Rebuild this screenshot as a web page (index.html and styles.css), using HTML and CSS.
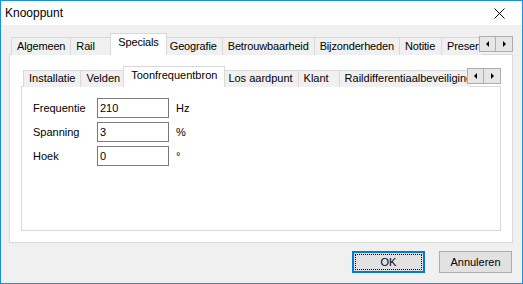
FILE: index.html
```html
<!DOCTYPE html>
<html lang="nl">
<head>
    <meta charset="UTF-8">
    <title>Knooppunt</title>
    <link rel="stylesheet" href="styles.css">
</head>
<body>
    <div class="window">
        <div class="titlebar">
            <span class="title">Knooppunt</span>
            <span class="close">
                <svg width="11" height="11" viewBox="0 0 11 11">
                    <path d="M0.5 0.5 L10.5 10.5 M10.5 0.5 L0.5 10.5" stroke="#000" stroke-width="1" fill="none"/>
                </svg>
            </span>
        </div>

        <div class="client">
            <div class="tabstrip main-tabs">
                <div class="tabs">
                    <div class="tab">Algemeen</div>
                    <div class="tab">Rail</div>
                    <div class="tab active">Specials</div>
                    <div class="tab">Geografie</div>
                    <div class="tab">Betrouwbaarheid</div>
                    <div class="tab">Bijzonderheden</div>
                    <div class="tab">Notitie</div>
                    <div class="tab">Presentatie</div>
                </div>
                <div class="spin">
                    <span class="spin-btn"><i class="arrow left"></i></span>
                    <span class="spin-btn"><i class="arrow right"></i></span>
                </div>
            </div>

            <div class="panel outer-panel">
                <div class="tabstrip">
                    <div class="tabs">
                        <div class="tab">Installatie</div>
                        <div class="tab">Velden</div>
                        <div class="tab active">Toonfrequentbron</div>
                        <div class="tab">Los aardpunt</div>
                        <div class="tab">Klant</div>
                        <div class="tab">Raildifferentiaalbeveiliging</div>
                    </div>
                    <div class="spin">
                        <span class="spin-btn"><i class="arrow left"></i></span>
                        <span class="spin-btn"><i class="arrow right"></i></span>
                    </div>
                </div>

                <div class="panel inner-panel">
                    <div class="field">
                        <label>Frequentie</label>
                        <input type="text" value="210">
                        <span class="unit">Hz</span>
                    </div>
                    <div class="field">
                        <label>Spanning</label>
                        <input type="text" value="3">
                        <span class="unit">%</span>
                    </div>
                    <div class="field">
                        <label>Hoek</label>
                        <input type="text" value="0">
                        <span class="unit">°</span>
                    </div>
                </div>
            </div>

            <div class="footer">
                <button class="btn default"><span>OK</span></button>
                <button class="btn">Annuleren</button>
            </div>
        </div>
    </div>
</body>
</html>
```

FILE: styles.css
```css
body {
    margin: 0;
    font-family: "Liberation Sans", Arial, sans-serif;
    font-size: 11px;
    color: #000;
}
.window {
    width: 523px;
    height: 284px;
    box-sizing: border-box;
    border: 1px solid #1a8fe6;
    background-color: #f0f0f0;
    display: flex;
    flex-direction: column;
}
.titlebar {
    height: 24px;
    background-color: #fff;
    display: flex;
    align-items: center;
    justify-content: space-between;
    padding-left: 4px;
}
.title {
    font-size: 12px;
}
.close {
    width: 46px;
    display: flex;
    justify-content: center;
    padding-left: 9px;
    padding-top: 1px;
}
.client {
    flex: 1;
    padding: 8px 9px 0 8px;
    display: flex;
    flex-direction: column;
}

/* tab strips */
.tabstrip {
    position: relative;
    height: 21px;
    z-index: 1;
}
.tabs {
    display: flex;
    align-items: flex-end;
    height: 22px;
    padding-left: 2px;
    overflow: hidden;
    margin-right: 31px;
}
.tab {
    flex: none;
    min-width: 43px;
    height: 18px;
    box-sizing: border-box;
    padding: 2px 5px 0 5px;
    border: 1px solid #d9d9d9;
    border-bottom: none;
    margin-right: -1px;
    background-color: #f0f0f0;
    white-space: nowrap;
}
.main-tabs .tab {
    letter-spacing: -0.15px;
}
.tab.active {
    height: 22px;
    margin: 0 -3px 0 -2px;
    padding: 2px 7px 0 7px;
    background-color: #fff;
    position: relative;
    z-index: 2;
}
.spin {
    position: absolute;
    right: 0;
    top: 3px;
    display: flex;
}
.spin-btn {
    width: 15px;
    height: 14px;
    border: 1px solid #adadad;
    background-color: #e6e6e6;
    display: flex;
    align-items: center;
    justify-content: center;
}
.spin-btn + .spin-btn {
    border-left: none;
    width: 16px;
}
.arrow {
    width: 0;
    height: 0;
    border-top: 3px solid transparent;
    border-bottom: 3px solid transparent;
}
.arrow.left {
    border-right: 3px solid #000;
}
.arrow.right {
    border-left: 3px solid #000;
}

/* panels */
.panel {
    background-color: #fff;
    border: 1px solid #d9d9d9;
}
.outer-panel {
    height: 189px;
    box-sizing: border-box;
    padding: 11px;
    display: flex;
    flex-direction: column;
}
.outer-panel .tabstrip {
    height: 20px;
}
.outer-panel .tabs {
    height: 21px;
}
.outer-panel .tab {
    height: 17px;
    padding-top: 1px;
    min-width: 42px;
}
.outer-panel .tab.active {
    height: 21px;
    padding-top: 2px;
}
.outer-panel .spin {
    top: 2px;
    right: 0;
}
.inner-panel {
    flex: 1;
    padding: 11px;
}
.field {
    display: flex;
    align-items: center;
    height: 20px;
    margin-bottom: 4px;
}
.field label {
    width: 64px;
}
.field input {
    width: 72px;
    height: 20px;
    box-sizing: border-box;
    border: 1px solid #7a7a7a;
    padding: 0 2px;
    margin: 0;
    font-family: inherit;
    font-size: 11px;
}
.unit {
    margin-left: 7px;
}

/* buttons */
.footer {
    display: flex;
    justify-content: flex-end;
    gap: 14px;
    padding-top: 8px;
    padding-right: 1px;
}
.btn {
    width: 73px;
    height: 22px;
    box-sizing: border-box;
    border: 1px solid #adadad;
    background-color: #e1e1e1;
    font-family: inherit;
    font-size: 11px;
    padding: 0;
    margin: 0;
}
.btn.default {
    border: 2px solid #0078d7;
    padding: 1px;
}
.btn.default span {
    display: flex;
    height: 100%;
    align-items: center;
    justify-content: center;
    box-sizing: border-box;
    border: 1px dotted #000;
}
```
